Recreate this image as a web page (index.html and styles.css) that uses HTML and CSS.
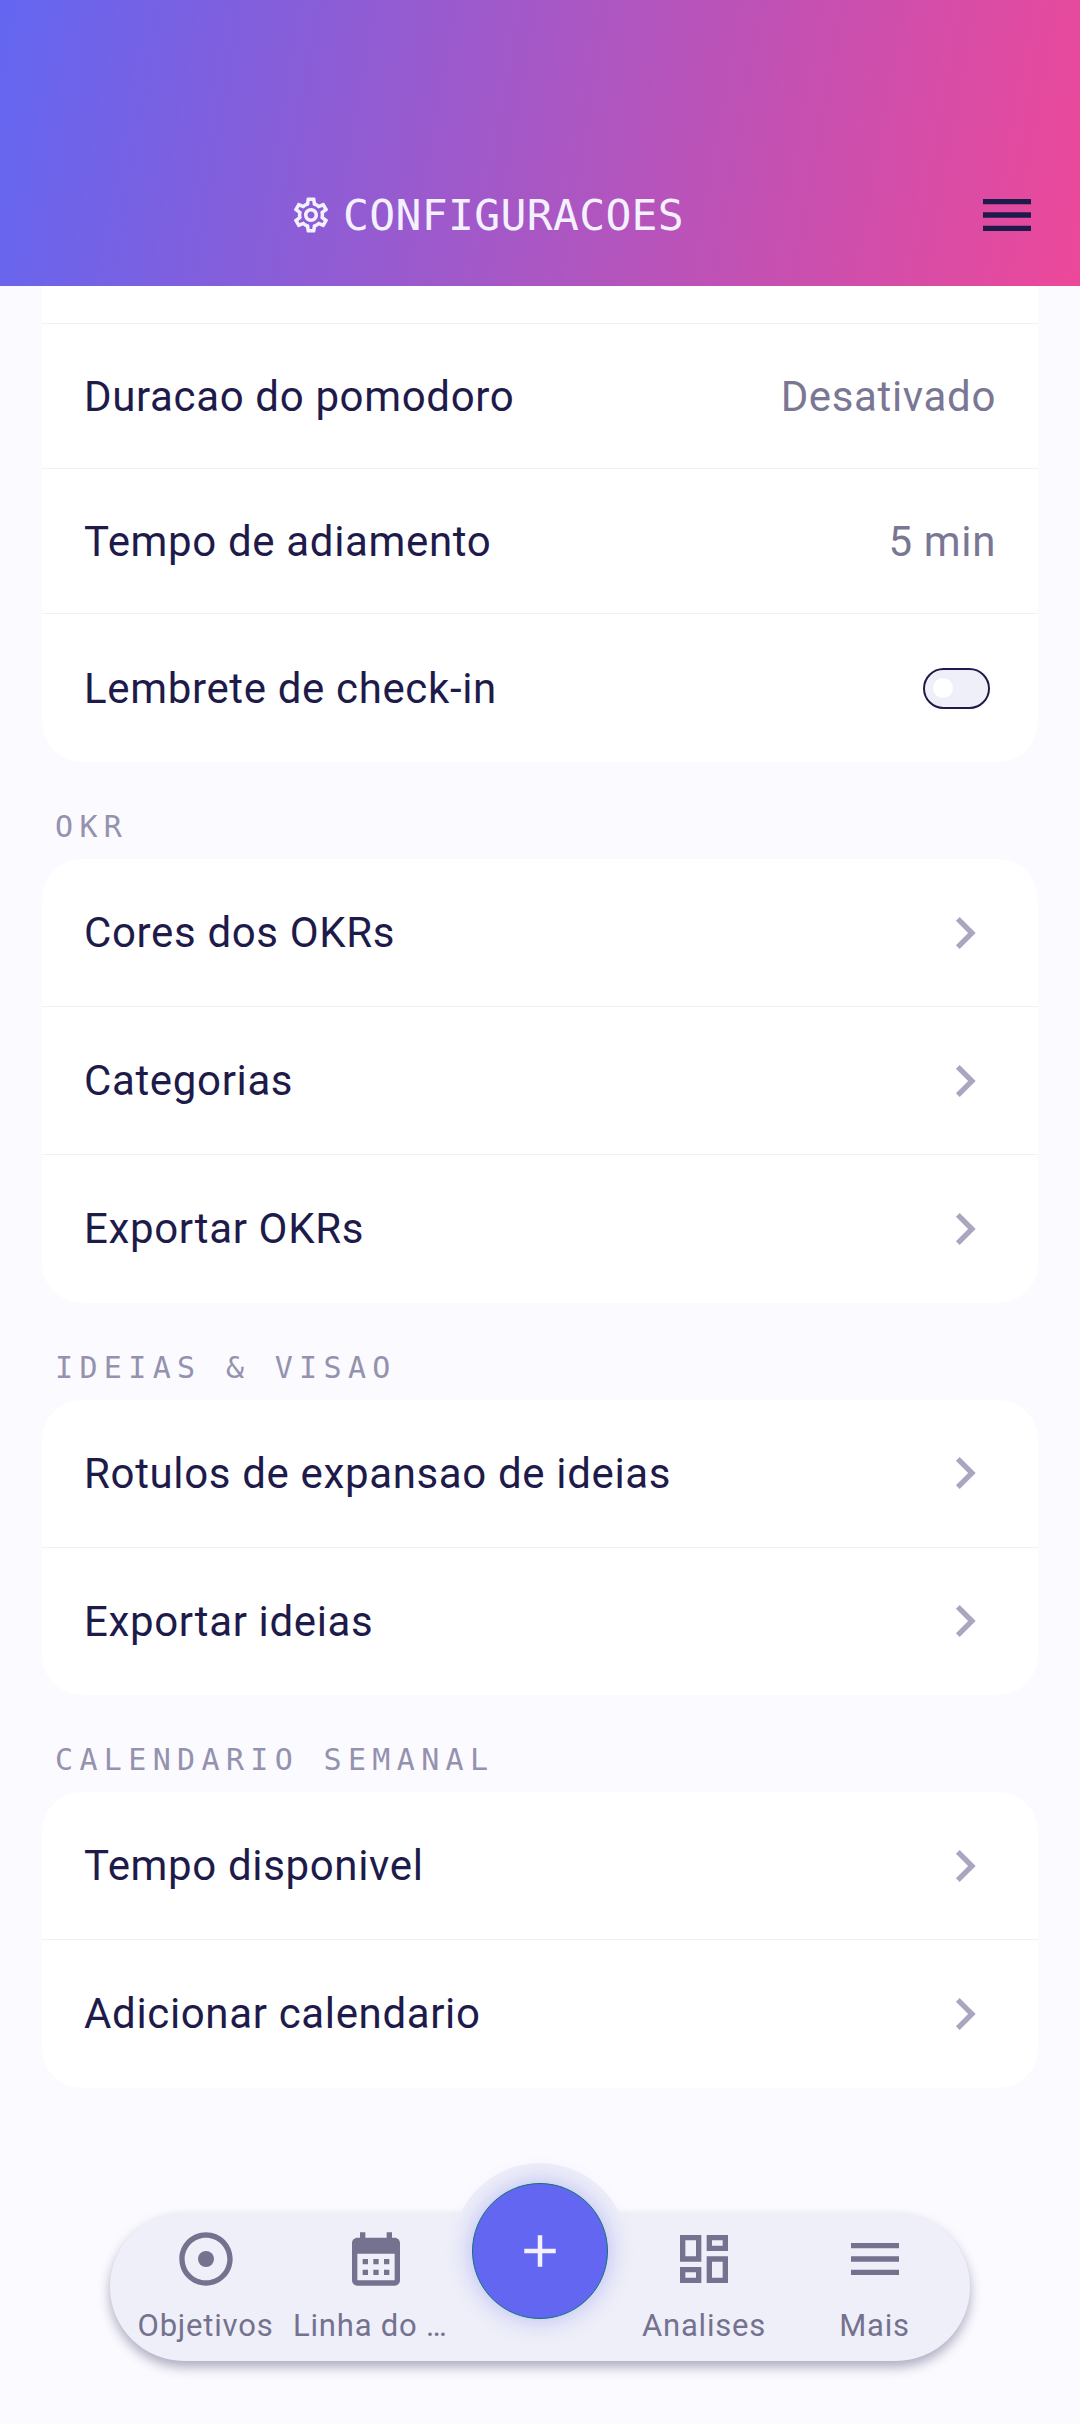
FILE: index.html
```html
<!DOCTYPE html>
<html lang="pt">
<head>
    <meta charset="UTF-8">
    <meta name="viewport" content="width=device-width, initial-scale=1.0">
    <title>Configuracoes</title>
    <link rel="stylesheet" href="styles.css">
</head>
<body>
    <header class="header">
        <div class="title">
            <svg class="title-icon" viewBox="0 0 24 24"><path d="M19.43 12.98c.04-.32.07-.64.07-.98 0-.34-.03-.66-.07-.98l2.11-1.65c.19-.15.24-.42.12-.64l-2-3.46c-.09-.16-.26-.25-.44-.25-.06 0-.12.01-.17.03l-2.49 1c-.52-.4-1.08-.73-1.69-.98l-.38-2.65C14.46 2.18 14.25 2 14 2h-4c-.25 0-.46.18-.49.42l-.38 2.65c-.61.25-1.17.59-1.69.98l-2.49-1c-.06-.02-.12-.03-.18-.03-.17 0-.34.09-.43.25l-2 3.46c-.13.22-.07.49.12.64l2.11 1.65c-.04.32-.07.65-.07.98 0 .33.03.66.07.98l-2.11 1.65c-.19.15-.24.42-.12.64l2 3.46c.09.16.26.25.44.25.06 0 .12-.01.17-.03l2.49-1c.52.4 1.08.73 1.69.98l.38 2.65c.03.24.24.42.49.42h4c.25 0 .46-.18.49-.42l.38-2.65c.61-.25 1.17-.59 1.69-.98l2.49 1c.06.02.12.03.18.03.17 0 .34-.09.43-.25l2-3.46c.12-.22.07-.49-.12-.64l-2.11-1.65zm-1.98-1.71c.04.31.05.52.05.73 0 .21-.02.43-.05.73l-.14 1.13.89.7 1.08.84-.7 1.21-1.27-.51-1.04-.42-.9.68c-.43.32-.84.56-1.25.73l-1.06.43-.16 1.13-.2 1.35h-1.4l-.19-1.35-.16-1.13-1.06-.43c-.43-.18-.83-.41-1.23-.71l-.91-.7-1.06.43-1.27.51-.7-1.21 1.08-.84.89-.7-.14-1.13c-.03-.31-.05-.54-.05-.74s.02-.43.05-.73l.14-1.13-.89-.7-1.08-.84.7-1.21 1.27.51 1.04.42.9-.68c.43-.32.84-.56 1.25-.73l1.06-.43.16-1.13.2-1.35h1.39l.19 1.35.16 1.13 1.06.43c.43.18.83.41 1.23.71l.91.7 1.06-.43 1.27-.51.7 1.21-1.07.85-.89.7.14 1.13zM12 8c-2.21 0-4 1.79-4 4s1.79 4 4 4 4-1.79 4-4-1.79-4-4-4zm0 6c-1.1 0-2-.9-2-2s.9-2 2-2 2 .9 2 2-.9 2-2 2z"/></svg>
            <span>CONFIGURACOES</span>
        </div>
        <svg class="header-menu" viewBox="0 0 24 24"><path d="M3 18h18v-2H3v2zm0-5h18v-2H3v2zm0-7v2h18V6H3z"/></svg>
    </header>

    <main class="content">
        <section class="card card-first">
            <div class="row row-cut"></div>
            <div class="row row-value"><span>Duracao do pomodoro</span><span class="value">Desativado</span></div>
            <div class="row row-value"><span>Tempo de adiamento</span><span class="value">5 min</span></div>
            <div class="row"><span>Lembrete de check-in</span><span class="toggle"><span class="thumb"></span></span></div>
        </section>

        <h2 class="section-label">OKR</h2>
        <section class="card">
            <div class="row"><span>Cores dos OKRs</span><svg class="chevron" viewBox="0 0 24 24"><path d="M10 6 8.59 7.41 13.17 12l-4.58 4.59L10 18l6-6z"/></svg></div>
            <div class="row"><span>Categorias</span><svg class="chevron" viewBox="0 0 24 24"><path d="M10 6 8.59 7.41 13.17 12l-4.58 4.59L10 18l6-6z"/></svg></div>
            <div class="row"><span>Exportar OKRs</span><svg class="chevron" viewBox="0 0 24 24"><path d="M10 6 8.59 7.41 13.17 12l-4.58 4.59L10 18l6-6z"/></svg></div>
        </section>

        <h2 class="section-label">IDEIAS &amp; VISAO</h2>
        <section class="card">
            <div class="row"><span>Rotulos de expansao de ideias</span><svg class="chevron" viewBox="0 0 24 24"><path d="M10 6 8.59 7.41 13.17 12l-4.58 4.59L10 18l6-6z"/></svg></div>
            <div class="row"><span>Exportar ideias</span><svg class="chevron" viewBox="0 0 24 24"><path d="M10 6 8.59 7.41 13.17 12l-4.58 4.59L10 18l6-6z"/></svg></div>
        </section>

        <h2 class="section-label">CALENDARIO SEMANAL</h2>
        <section class="card">
            <div class="row"><span>Tempo disponivel</span><svg class="chevron" viewBox="0 0 24 24"><path d="M10 6 8.59 7.41 13.17 12l-4.58 4.59L10 18l6-6z"/></svg></div>
            <div class="row"><span>Adicionar calendario</span><svg class="chevron" viewBox="0 0 24 24"><path d="M10 6 8.59 7.41 13.17 12l-4.58 4.59L10 18l6-6z"/></svg></div>
        </section>
    </main>

    <nav class="bottom-nav">
        <div class="nav-item">
            <svg class="nav-icon" viewBox="0 0 24 24"><path d="M12 2C6.48 2 2 6.48 2 12s4.48 10 10 10 10-4.48 10-10S17.52 2 12 2zm0 18c-4.42 0-8-3.58-8-8s3.58-8 8-8 8 3.58 8 8-3.58 8-8 8z"/><circle cx="12" cy="12" r="3"/></svg>
            <span>Objetivos</span>
        </div>
        <div class="nav-item">
            <svg class="nav-icon" viewBox="0 0 24 24"><path d="M19 4h-1V2h-2v2H8V2H6v2H5c-1.1 0-2 .9-2 2v14c0 1.1.9 2 2 2h14c1.1 0 2-.9 2-2V6c0-1.1-.9-2-2-2zm0 16H5V10h14v10zM9 14H7v-2h2v2zm4 0h-2v-2h2v2zm4 0h-2v-2h2v2zm-8 4H7v-2h2v2zm4 0h-2v-2h2v2zm4 0h-2v-2h2v2z"/></svg>
            <span class="nav-label-cut">Linha do …</span>
        </div>
        <div class="fab-cell">
            <button class="fab"><svg viewBox="0 0 24 24"><path d="M19 13h-6v6h-2v-6H5v-2h6V5h2v6h6v2z"/></svg></button>
        </div>
        <div class="nav-item">
            <svg class="nav-icon" viewBox="0 0 24 24"><path d="M19 5v2h-4V5h4M9 5v6H5V5h4m10 8v6h-4v-6h4M9 17v2H5v-2h4M21 3h-8v6h8V3zM11 3H3v10h8V3zm10 8h-8v10h8V11zm-10 4H3v6h8v-6z"/></svg>
            <span>Analises</span>
        </div>
        <div class="nav-item">
            <svg class="nav-icon" viewBox="0 0 24 24"><path d="M3 18h18v-2H3v2zm0-5h18v-2H3v2zm0-7v2h18V6H3z"/></svg>
            <span>Mais</span>
        </div>
    </nav>
</body>
</html>
```

FILE: styles.css
```css
body {
    margin: 0;
    height: 2424px;
    overflow: hidden;
    position: relative;
    background-color: #fbfaff;
    font-family: Roboto, sans-serif;
    color: #1e1b4b;
}
.header {
    height: 286px;
    padding: 0 41px 0 0;
    box-sizing: border-box;
    display: flex;
    align-items: flex-end;
    justify-content: space-between;
    background: linear-gradient(100deg, #6366f1, #ec4899);
}
.title {
    display: flex;
    align-items: center;
    margin: 0 0 46px 290px;
    gap: 11px;
    color: #f3f1ff;
    font-family: "DejaVu Sans Mono", monospace;
    font-size: 43px;
    line-height: 50px;
    letter-spacing: 0.35px;
}
.title-icon {
    width: 42px;
    height: 42px;
    fill: #f3f1ff;
}
.header-menu {
    width: 64px;
    height: 64px;
    margin-bottom: 39px;
    fill: #1e1b4b;
}
.content {
    padding: 0 42px;
}
.card {
    background-color: #fff;
    border-radius: 40px;
    overflow: hidden;
}
.card-first {
    margin-bottom: 1px;
    border-radius: 0 0 40px 40px;
}
.row {
    height: 147px;
    padding: 0 42px;
    display: flex;
    align-items: center;
    justify-content: space-between;
    font-size: 42px;
    letter-spacing: 0.65px;
    border-bottom: 1px solid #f0f0f8;
}
.row:last-child {
    height: 147.5px;
    border-bottom: none;
}
.card-first .row:last-child {
    height: 148px;
}
.row-cut {
    height: 37px;
}
.row-value {
    height: 144px;
}
.value {
    color: #7a7794;
}
.section-label {
    margin: 49px 0 16px 13px;
    font-family: "DejaVu Sans Mono", monospace;
    font-size: 30px;
    font-weight: normal;
    line-height: 32px;
    letter-spacing: 6.35px;
    color: #9492ae;
}
.chevron {
    width: 64px;
    height: 64px;
    fill: #a9a7c0;
    margin-right: -1px;
}
.toggle {
    width: 67px;
    height: 41px;
    box-sizing: border-box;
    margin-right: 6px;
    padding-left: 8px;
    display: flex;
    align-items: center;
    border: 2px solid #1e1b4b;
    border-radius: 21px;
    background-color: #eeeff8;
}
.thumb {
    width: 20px;
    height: 20px;
    border-radius: 50%;
    background-color: #fff;
}
.bottom-nav {
    position: absolute;
    left: 110px;
    bottom: 63px;
    width: 860px;
    height: 148px;
    box-sizing: border-box;
    padding: 0 10px;
    display: grid;
    grid-template-columns: 171px 170px 158px 170px 171px;
    border-radius: 74px;
    background-color: #eeeff8;
    box-shadow: 0 6px 12px rgba(30, 27, 75, 0.35);
}
.nav-item {
    padding-top: 14px;
    display: flex;
    flex-direction: column;
    align-items: center;
    color: #75728f;
    font-size: 31px;
    letter-spacing: 0.8px;
    white-space: nowrap;
}
.nav-label-cut {
    width: 166px;
}
.nav-icon {
    width: 64px;
    height: 64px;
    margin-bottom: 16px;
    fill: #75728f;
}
.fab-cell {
    display: flex;
    justify-content: center;
}
.fab {
    width: 136px;
    height: 136px;
    margin-top: -30px;
    padding: 0;
    display: flex;
    align-items: center;
    justify-content: center;
    border: 1px solid #0f766e;
    border-radius: 50%;
    background-color: #6366f1;
    box-shadow: 0 0 24px rgba(99, 102, 241, 0.4), 0 0 0 20px #eeeff8;
}
.fab svg {
    width: 54px;
    height: 54px;
    fill: #f3f1ff;
}
```
